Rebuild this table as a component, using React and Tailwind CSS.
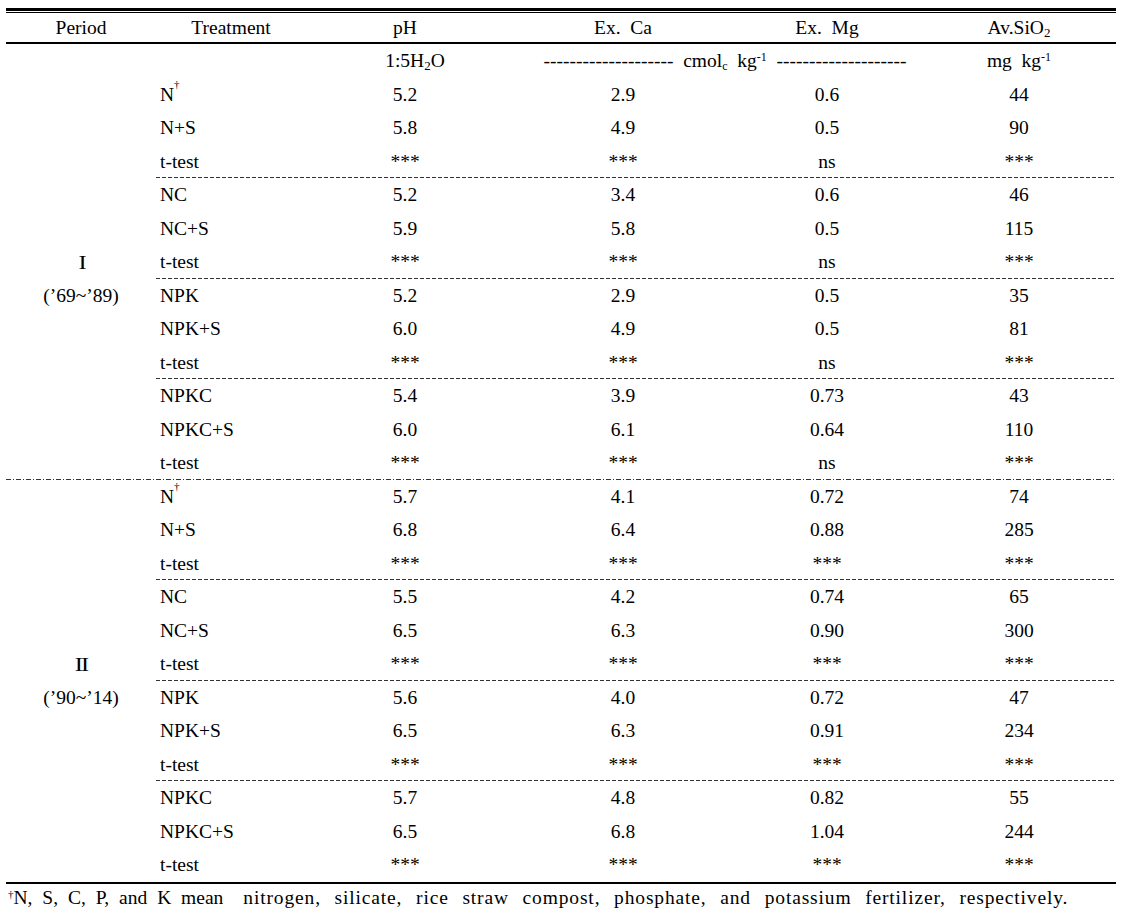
import React from "react";

const periods = [
  {
    label: "I",
    range: "(’69~’89)",
    groups: [
      [
        ["N", "5.2", "2.9", "0.6", "44", true],
        ["N+S", "5.8", "4.9", "0.5", "90"],
        ["t-test", "***", "***", "ns", "***"],
      ],
      [
        ["NC", "5.2", "3.4", "0.6", "46"],
        ["NC+S", "5.9", "5.8", "0.5", "115"],
        ["t-test", "***", "***", "ns", "***"],
      ],
      [
        ["NPK", "5.2", "2.9", "0.5", "35"],
        ["NPK+S", "6.0", "4.9", "0.5", "81"],
        ["t-test", "***", "***", "ns", "***"],
      ],
      [
        ["NPKC", "5.4", "3.9", "0.73", "43"],
        ["NPKC+S", "6.0", "6.1", "0.64", "110"],
        ["t-test", "***", "***", "ns", "***"],
      ],
    ],
  },
  {
    label: "II",
    range: "(’90~’14)",
    groups: [
      [
        ["N", "5.7", "4.1", "0.72", "74", true],
        ["N+S", "6.8", "6.4", "0.88", "285"],
        ["t-test", "***", "***", "***", "***"],
      ],
      [
        ["NC", "5.5", "4.2", "0.74", "65"],
        ["NC+S", "6.5", "6.3", "0.90", "300"],
        ["t-test", "***", "***", "***", "***"],
      ],
      [
        ["NPK", "5.6", "4.0", "0.72", "47"],
        ["NPK+S", "6.5", "6.3", "0.91", "234"],
        ["t-test", "***", "***", "***", "***"],
      ],
      [
        ["NPKC", "5.7", "4.8", "0.82", "55"],
        ["NPKC+S", "6.5", "6.8", "1.04", "244"],
        ["t-test", "***", "***", "***", "***"],
      ],
    ],
  },
];

const cols = "grid grid-cols-[150px_198px_238px_170px_204px]";

function Row({ row }) {
  const [treat, ph, ca, mg, si, dagger] = row;
  return (
    <div className={`${cols} h-[33.5px] items-center`}>
      <div className="pl-[4px]">
        {treat}
        {dagger && <sup className="text-[11px] align-super">†</sup>}
      </div>
      <div className="text-center">{ph}</div>
      <div className="text-center">{ca}</div>
      <div className="text-center">{mg}</div>
      <div className="text-center pl-[10px]">{si}</div>
    </div>
  );
}

export default function App() {
  return (
    <div className="bg-white min-h-screen w-[1129px] h-[916px] text-black font-['Liberation_Serif',serif] text-[19.5px] leading-none">
      <div className="ml-[6px] w-[1110px] pt-[8px]">
        {/* top double rule */}
        <div className="h-[3px] bg-black" />
        <div className="h-px mt-px bg-black" />

        {/* HEADER */}
        <div className="grid grid-cols-[150px_150px_198px_238px_170px_204px] h-[29px] items-center">
          <div className="text-center">Period</div>
          <div className="text-center">Treatment</div>
          <div className="text-center">pH</div>
          <div className="text-center">Ex.&nbsp; Ca</div>
          <div className="text-center">Ex.&nbsp; Mg</div>
          <div className="text-center pl-[10px]">
            Av.SiO<sub className="text-[13px]">2</sub>
          </div>
        </div>
        <div className="h-[2px] bg-black" />

        {/* UNITS */}
        <div className="grid grid-cols-[150px_150px_198px_408px_204px] h-[33.5px] items-center">
          <div />
          <div />
          <div className="text-center pl-[20px]">
            1:5H<sub className="text-[13px]">2</sub>O
          </div>
          <div className="text-center whitespace-nowrap pl-[34px]">
            -------------------- &nbsp;cmol<sub className="text-[12px]">c</sub>&nbsp; kg
            <sup className="text-[12px]">-1</sup>&nbsp; --------------------
          </div>
          <div className="text-center pl-[10px]">
            mg&nbsp; kg<sup className="text-[12px]">-1</sup>
          </div>
        </div>

        {/* BODY */}
        {periods.map((p, pi) => (
          <div key={pi}>
            <div className="flex">
              <div className="w-[150px] flex flex-col items-center justify-center leading-[33px]">
                <div className="tracking-[-1.5px] scale-x-[1.25]">{p.label}</div>
                <div>{p.range}</div>
              </div>
              <div className="flex-1">
                {p.groups.map((g, gi) => (
                  <div key={gi}>
                    {g.map((r, ri) => (
                      <Row key={ri} row={r} />
                    ))}
                    {gi < p.groups.length - 1 && (
                      <div className="h-px -mt-px bg-[image:repeating-linear-gradient(to_right,#333_0_4px,transparent_4px_6px)]" />
                    )}
                  </div>
                ))}
              </div>
            </div>
            {pi < periods.length - 1 && (
              <div className="h-px -mt-px bg-[image:repeating-linear-gradient(to_right,#333_0_5px,transparent_5px_7px,#333_7px_8px,transparent_8px_10px)]" />
            )}
          </div>
        ))}

        {/* bottom rule */}
        <div className="h-[2px] bg-black" />

        {/* FOOTNOTE */}
        <div className="h-[28px] flex items-center pl-[2px] whitespace-nowrap">
          <span className="[word-spacing:5px]">
            <sup className="text-[11px]">†</sup>N, S, C, P, and K mean
          </span>
          <span className="ml-[20px] [word-spacing:8px] tracking-[0.85px]">
            nitrogen, silicate, rice straw compost, phosphate, and potassium fertilizer, respectively.
          </span>
        </div>
      </div>
    </div>
  );
}
